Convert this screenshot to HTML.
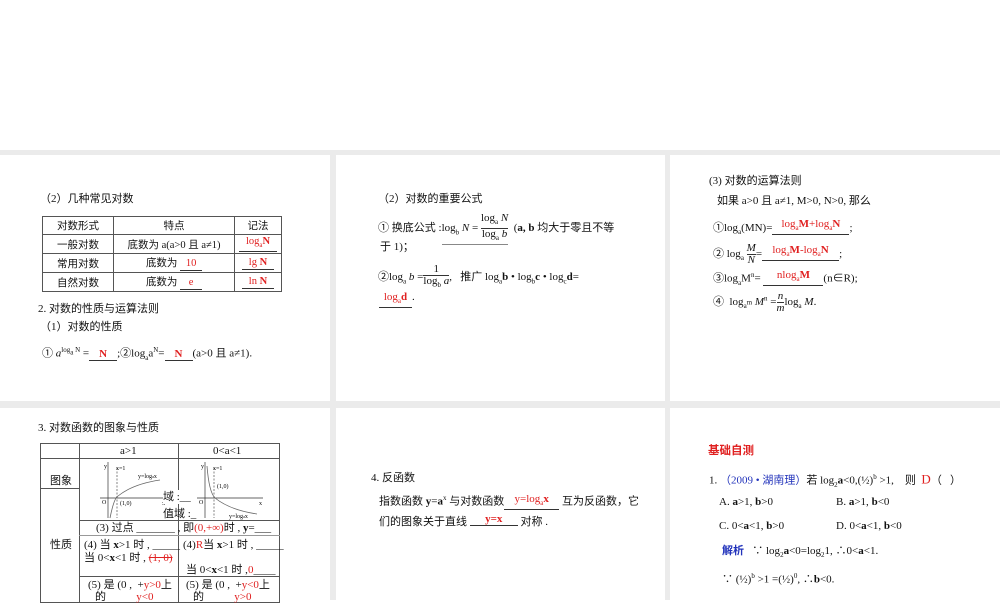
<!DOCTYPE html>
<html><head><meta charset="utf-8"><style>
*{margin:0;padding:0;box-sizing:border-box}
body{width:1000px;height:600px;background:#fff;position:relative;overflow:hidden;font-family:"Liberation Serif","Noto Sans CJK SC",serif;font-size:11px;color:#111}
.g{position:absolute;background:#ebebeb}
.p{position:absolute;background:#fff;overflow:hidden}
.t{position:absolute;white-space:nowrap;line-height:14px}
.r{color:#e02020}
.b{color:#2233bb}
.u{display:inline-block;border-bottom:1px solid #333;text-align:center;line-height:12px}
sub{font-size:7px}
sup{font-size:7px}
table{border-collapse:collapse;position:absolute}
td{border:1px solid #555;text-align:center;font-size:10.5px;padding:0}
</style></head><body>
<div class="g" style="left:0;top:150px;width:1000px;height:450px"></div>
<div class="p" style="left:0;top:155px;width:330px;height:246px"></div>
<div class="p" style="left:336px;top:155px;width:329px;height:246px"></div>
<div class="p" style="left:670px;top:155px;width:330px;height:246px"></div>
<div class="p" style="left:0;top:408px;width:330px;height:192px"></div>
<div class="p" style="left:336px;top:408px;width:329px;height:192px"></div>
<div class="p" style="left:670px;top:408px;width:330px;height:192px"></div>

<!-- panel 1 -->
<div class="t" style="left:40px;top:192px">（2）几种常见对数</div>
<table style="left:42px;top:216px;width:240px">
<tr style="height:18px"><td style="width:71px">对数形式</td><td style="width:121px">特点</td><td>记法</td></tr>
<tr style="height:19px"><td>一般对数</td><td>底数为 a(a&gt;0 且 a≠1)</td><td><span class="u r" style="width:38px">log<sub>a</sub><b>N</b></span></td></tr>
<tr style="height:19px"><td>常用对数</td><td>底数为 <span class="u r" style="width:22px">10</span></td><td><span class="u r" style="width:32px">lg <b>N</b></span></td></tr>
<tr style="height:19px"><td>自然对数</td><td>底数为 <span class="u r" style="width:22px">e</span></td><td><span class="u r" style="width:32px">ln <b>N</b></span></td></tr>
</table>
<div class="t" style="left:38px;top:302px">2. 对数的性质与运算法则</div>
<div class="t" style="left:40px;top:320px">（1）对数的性质</div>
<div class="t" style="left:42px;top:343px">① <i>a</i><sup>log<sub>a</sub> N</sup> =<span class="u r" style="width:28px"><b>N</b></span>;②log<sub>a</sub>a<sup>N</sup>=<span class="u r" style="width:28px"><b>N</b></span>(a&gt;0 且 a≠1).</div>

<!-- panel 2 -->
<div class="t" style="left:378px;top:192px">（2）对数的重要公式</div>
<div class="t" style="left:378px;top:213px">① 换底公式 :<span style="border-bottom:1px solid #888;display:inline-block">log<sub>b</sub> <i>N</i> = <span style="display:inline-block;vertical-align:middle;text-align:center;line-height:11px"><span style="display:block;border-bottom:1px solid #333">log<sub>a</sub> <i>N</i></span><span>log<sub>a</sub> <i>b</i></span></span></span> &nbsp;(<b>a, b</b> 均大于零且不等</div>
<div class="t" style="left:380px;top:240px">于 1)；</div>
<div class="t" style="left:378px;top:264px">②log<sub>a</sub> <i>b</i> =<span style="display:inline-block;vertical-align:middle;text-align:center;line-height:11px"><span style="display:block;border-bottom:1px solid #333">1</span><span>log<sub>b</sub> <i>a</i></span></span>, &nbsp; 推广 log<sub>a</sub><b>b</b> • log<sub>b</sub><b>c</b> • log<sub>c</sub><b>d</b>=</div>
<div class="t" style="left:379px;top:290px"><span class="u r" style="width:33px">log<sub>a</sub><b>d</b></span>.</div>

<!-- panel 3 -->
<div class="t" style="left:709px;top:174px">(3) 对数的运算法则</div>
<div class="t" style="left:717px;top:194px">如果 a&gt;0 且 a≠1, M&gt;0, N&gt;0, 那么</div>
<div class="t" style="left:713px;top:218px">①log<sub>a</sub>(MN)=<span class="u r" style="width:77px;vertical-align:4px">log<sub>a</sub><b>M</b>+log<sub>a</sub><b>N</b></span>;</div>
<div class="t" style="left:713px;top:243px">② log<sub>a</sub> <span style="display:inline-block;vertical-align:middle;text-align:center;line-height:11px"><i style="display:block;border-bottom:1px solid #333">M</i><i>N</i></span>=<span class="u r" style="width:77px;vertical-align:4px">log<sub>a</sub><b>M</b>-log<sub>a</sub><b>N</b></span>;</div>
<div class="t" style="left:713px;top:268px">③log<sub>a</sub>M<sup>n</sup>= <span class="u r" style="width:60px;vertical-align:4px">nlog<sub>a</sub><b>M</b></span>(n∈R);</div>
<div class="t" style="left:713px;top:291px">④ &nbsp;log<sub>a<sup>m</sup></sub> <i>M</i><sup>n</sup> =<span style="display:inline-block;vertical-align:middle;text-align:center;line-height:11px"><i style="display:block;border-bottom:1px solid #333">n</i><i>m</i></span>log<sub>a</sub> <i>M</i>.</div>

<!-- panel 4 -->
<div class="t" style="left:38px;top:421px">3. 对数函数的图象与性质</div>
<div style="position:absolute;left:40px;top:443px;width:240px;height:160px;border:1px solid #555"></div>
<div style="position:absolute;left:79px;top:443px;width:1px;height:160px;background:#555"></div>
<div style="position:absolute;left:178px;top:443px;width:1px;height:160px;background:#555"></div>
<div style="position:absolute;left:40px;top:458px;width:240px;height:1px;background:#555"></div>
<div style="position:absolute;left:40px;top:488px;width:39px;height:1px;background:#555"></div>
<div style="position:absolute;left:79px;top:520px;width:201px;height:1px;background:#555"></div>
<div style="position:absolute;left:79px;top:535px;width:201px;height:1px;background:#999"></div>
<div style="position:absolute;left:79px;top:576px;width:201px;height:1px;background:#555"></div>
<div class="t" style="left:120px;top:444px">a&gt;1</div>
<div class="t" style="left:213px;top:444px">0&lt;a&lt;1</div>
<div class="t" style="left:50px;top:474px">图象</div>
<div class="t" style="left:50px;top:538px">性质</div>
<svg style="position:absolute;left:98px;top:460px" width="72" height="60" font-size="6" font-family="Liberation Serif">
<line x1="10" y1="2" x2="10" y2="58" stroke="#333" stroke-width=".7"/><line x1="2" y1="38" x2="68" y2="38" stroke="#333" stroke-width=".7"/>
<line x1="19" y1="8" x2="19" y2="58" stroke="#333" stroke-width=".6" stroke-dasharray="2 1.5"/>
<path d="M12 58 Q16 38 20 36 Q35 24 62 20" fill="none" stroke="#666" stroke-width=".8"/>
<text x="6" y="8">y</text><text x="18" y="10">x=1</text><text x="40" y="18">y=log<tspan font-size="4">a</tspan>x</text><text x="4" y="44">O</text><text x="22" y="45">(1,0)</text><text x="64" y="45">x</text></svg>
<svg style="position:absolute;left:195px;top:460px" width="72" height="60" font-size="6" font-family="Liberation Serif">
<line x1="10" y1="2" x2="10" y2="58" stroke="#333" stroke-width=".7"/><line x1="2" y1="38" x2="68" y2="38" stroke="#333" stroke-width=".7"/>
<line x1="19" y1="8" x2="19" y2="58" stroke="#333" stroke-width=".6" stroke-dasharray="2 1.5"/>
<path d="M12 6 Q14 32 20 38 Q35 50 62 54" fill="none" stroke="#666" stroke-width=".8"/>
<text x="6" y="8">y</text><text x="18" y="10">x=1</text><text x="22" y="28">(1,0)</text><text x="34" y="58">y=log<tspan font-size="4">a</tspan>x</text><text x="4" y="44">O</text><text x="64" y="45">x</text></svg>
<div class="t" style="left:163px;top:490px;background:#fff">域 :__</div>
<div class="t" style="left:163px;top:507px">值域 :_</div>
<div class="t" style="left:96px;top:521px">(3) 过点 _______ , 即<span class="r">(0,+∞)</span>时 , <b>y</b>=___</div>
<div class="t" style="left:84px;top:538px">(4) 当 <b>x</b>&gt;1 时 , _____</div>
<div class="t" style="left:84px;top:551px">当 0&lt;<b>x</b>&lt;1 时 , <span class="r" style="text-decoration:line-through">(1, 0)</span></div>
<div class="t" style="left:183px;top:538px">(4)<span class="r">R</span>当 <b>x</b>&gt;1 时 , _____</div>
<div class="t" style="left:186px;top:563px">当 0&lt;<b>x</b>&lt;1 时 ,<span class="r">0</span>____</div>
<div class="t" style="left:88px;top:578px">(5) 是 (0 , &nbsp;+<span class="r">y&gt;0</span>上</div>
<div class="t" style="left:95px;top:590px">的 &nbsp; &nbsp; &nbsp; &nbsp; &nbsp; <span class="r">y&lt;0</span></div>
<div class="t" style="left:186px;top:578px">(5) 是 (0 , &nbsp;+<span class="r">y&lt;0</span>上</div>
<div class="t" style="left:193px;top:590px">的 &nbsp; &nbsp; &nbsp; &nbsp; &nbsp; <span class="r">y&gt;0</span></div>

<!-- panel 5 -->
<div class="t" style="left:371px;top:471px">4. 反函数</div>
<div class="t" style="left:379px;top:491px">指数函数 <b>y</b>=<b>a</b><sup>x</sup> 与对数函数<span class="u r" style="width:55px;vertical-align:3px">y=log<sub>a</sub><b>x</b></span> 互为反函数，它</div>
<div class="t" style="left:379px;top:513px">们的图象关于直线 <span class="u r" style="width:48px;vertical-align:3px"><b>y=x</b></span> 对称 .</div>

<!-- panel 6 -->
<div class="t r" style="left:708px;top:444px;font-weight:bold;font-size:11.5px">基础自测</div>
<div class="t" style="left:709px;top:470px">1. <span class="b">（2009 • 湖南理）</span>若 log<sub>2</sub><b>a</b>&lt;0,(½)<sup>b</sup> &gt;1, &nbsp; &nbsp;则 &nbsp;<span class="r" style="font-size:13px">D</span>（ &nbsp; ）</div>
<div class="t" style="left:719px;top:495px">A. <b>a</b>&gt;1, <b>b</b>&gt;0</div>
<div class="t" style="left:836px;top:495px">B. <b>a</b>&gt;1, <b>b</b>&lt;0</div>
<div class="t" style="left:719px;top:519px">C. 0&lt;<b>a</b>&lt;1, <b>b</b>&gt;0</div>
<div class="t" style="left:836px;top:519px">D. 0&lt;<b>a</b>&lt;1, <b>b</b>&lt;0</div>
<div class="t" style="left:722px;top:544px"><span class="b" style="font-weight:bold">解析</span> &nbsp; ∵ log<sub>2</sub><b>a</b>&lt;0=log<sub>2</sub>1, ∴0&lt;<b>a</b>&lt;1.</div>
<div class="t" style="left:722px;top:569px">∵ (½)<sup>b</sup> &gt;1 =(½)<sup>0</sup>, ∴<b>b</b>&lt;0.</div>
</body></html>
